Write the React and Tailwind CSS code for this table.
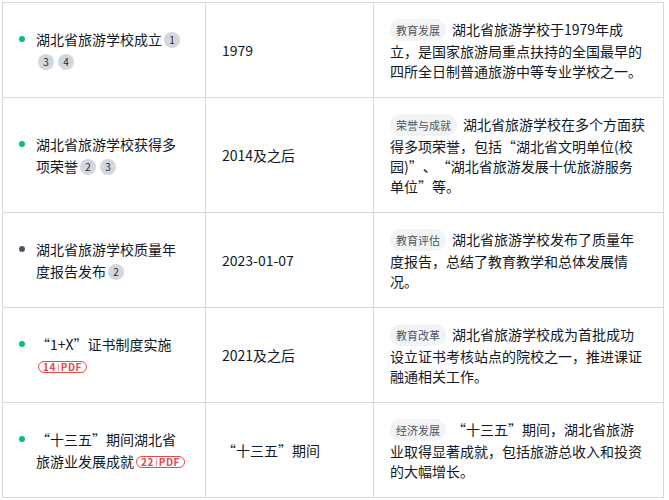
import React from "react";

const rows = [
  {
    dot: "bg-[#10b981]",
    title: "湖北省旅游学校成立",
    refs: ["1", "3", "4"],
    pdf: null,
    time: "1979",
    tag: "教育发展",
    desc: "湖北省旅游学校于1979年成立，是国家旅游局重点扶持的全国最早的四所全日制普通旅游中等专业学校之一。",
  },
  {
    dot: "bg-[#10b981]",
    title: "湖北省旅游学校获得多项荣誉",
    refs: ["2", "3"],
    pdf: null,
    time: "2014及之后",
    tag: "荣誉与成就",
    desc: "湖北省旅游学校在多个方面获得多项荣誉，包括“湖北省文明单位(校园)”、“湖北省旅游发展十优旅游服务单位”等。",
  },
  {
    dot: "bg-[#4b5563]",
    title: "湖北省旅游学校质量年度报告发布",
    refs: ["2"],
    pdf: null,
    time: "2023-01-07",
    tag: "教育评估",
    desc: "湖北省旅游学校发布了质量年度报告，总结了教育教学和总体发展情况。",
  },
  {
    dot: "bg-[#10b981]",
    title: "“1+X”证书制度实施",
    refs: [],
    pdf: "14",
    time: "2021及之后",
    tag: "教育改革",
    desc: "湖北省旅游学校成为首批成功设立证书考核站点的院校之一，推进课证融通相关工作。",
  },
  {
    dot: "bg-[#10b981]",
    title: "“十三五”期间湖北省旅游业发展成就",
    refs: [],
    pdf: "22",
    time: "“十三五”期间",
    tag: "经济发展",
    desc: "“十三五”期间，湖北省旅游业取得显著成就，包括旅游总收入和投资的大幅增长。",
  },
];

function Ref({ n }) {
  return (
    <span className="inline-flex items-center justify-center w-[16px] h-[16px] rounded-full bg-[#d3d6dd] text-[10px] leading-none text-[#1f2937] align-middle mx-[2px] relative top-[-1px]">
      {n}
    </span>
  );
}

function Pdf({ n }) {
  return (
    <span className="inline-flex items-center h-[12px] px-[4px] rounded-full border border-[#e5484d] text-[#e5484d] text-[10px] font-bold leading-none align-middle ml-[2px] relative top-[-1px] tracking-[0.5px]">
      {n}
      <span className="mx-[2px] w-px h-[7px] bg-[#e5484d] opacity-60" />
      PDF
    </span>
  );
}

export default function App() {
  return (
    <div
      className="bg-white w-[669px] h-[500px] overflow-hidden pt-[2px] pl-[2px] [text-spacing-trim:space-all]"
      style={{ fontFamily: '"Noto Sans CJK SC", "Liberation Sans", sans-serif' }}
    >
      <table className="border-collapse table-fixed w-[661px] text-[#111827]">
        <colgroup>
          <col className="w-[203px]" />
          <col className="w-[168px]" />
          <col className="w-[290px]" />
        </colgroup>
        <tbody>
          {rows.map((r, i) => (
            <tr key={i}>
              <td className="border border-[#d5d8df] px-[16px] py-[16px] align-middle">
                <div className="flex items-start">
                  <span className={`shrink-0 w-[6px] h-[6px] rounded-full mt-[8px] mr-[11px] ${r.dot}`} />
                  <div className="text-[14px] leading-[22px]">
                    {r.title}
                    {r.refs.map((n) => (
                      <Ref key={n} n={n} />
                    ))}
                    {r.pdf && <Pdf n={r.pdf} />}
                  </div>
                </div>
              </td>
              <td className="border border-[#d5d8df] px-[16px] py-[16px] align-middle text-[14px] leading-[20px]">
                {r.time}
              </td>
              <td className="border border-[#d5d8df] pl-[16px] pr-[18px] py-[16px] align-top text-[14px] leading-[20px]">
                <span className="inline-flex items-center h-[22px] px-[6px] rounded-full bg-[#f2f3f5] text-[11px] leading-none text-[#4b5563] align-top mr-[6px]">
                  {r.tag}
                </span>
                {r.desc}
              </td>
            </tr>
          ))}
        </tbody>
      </table>
    </div>
  );
}
